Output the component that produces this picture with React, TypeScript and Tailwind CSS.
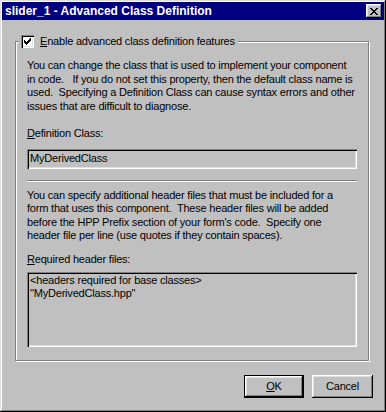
import React from "react";

const raised =
  "shadow-[inset_-1px_-1px_#000,inset_1px_1px_#fff,inset_-2px_-2px_#808080,inset_2px_2px_#dfdfdf]";
const sunken =
  "shadow-[inset_1px_1px_#808080,inset_2px_2px_#000,inset_-1px_-1px_#fff,inset_-2px_-2px_#dfdfdf]";

const CheckBox: React.FC = () => (
  <div className={`w-[13px] h-[13px] bg-white flex items-center justify-center ${sunken}`}>
    <svg width="7" height="7" viewBox="0 0 7 7" shapeRendering="crispEdges">
      <path d="M0 2h1v3H0zM1 3h1v3H1zM2 4h1v3H2zM3 3h1v3H3zM4 2h1v3H4zM5 1h1v3H5zM6 0h1v3H6z" fill="#000" />
    </svg>
  </div>
);

const App: React.FC = () => {
  return (
    <div
      className="w-[386px] h-[412px] bg-[#c0c0c0] p-[2px] flex flex-col text-black text-[11px] tracking-[-0.2px] shadow-[inset_-1px_-1px_#000,inset_1px_1px_#dfdfdf,inset_-2px_-2px_#808080,inset_2px_2px_#fff]"
      style={{ fontFamily: '"Liberation Sans", Arial, sans-serif' }}
    >
      {/* title bar */}
      <div className="h-[18px] bg-[#000080] flex items-center justify-between pl-[3px] pr-[2px]">
        <span className="text-white font-bold text-[12px] tracking-normal leading-none">
          slider_1 - Advanced Class Definition
        </span>
        <div className={`w-[16px] h-[14px] bg-[#c0c0c0] flex items-center justify-center ${raised}`}>
          <svg width="8" height="7" viewBox="0 0 8 7" shapeRendering="crispEdges">
            <path d="M0 0h2v1H0zM6 0h2v1H6zM1 1h2v1H1zM5 1h2v1H5zM2 2h4v1H2zM3 3h2v1H3zM2 4h4v1H2zM1 5h2v1H1zM5 5h2v1H5zM0 6h2v1H0zM6 6h2v1H6z" fill="#000" />
          </svg>
        </div>
      </div>

      <div className="flex-1 flex flex-col pl-[13px]">
        {/* group box */}
        <div className="relative mt-[21px] w-[354px] h-[320px] border border-[#808080] shadow-[1px_1px_#fff,inset_1px_1px_#fff] px-[11px] pt-[17px] flex flex-col">
          <div className="absolute -top-[7px] left-[3px] bg-[#c0c0c0] px-[2px] flex items-center gap-[6px] h-[13px] pr-[3px]">
            <CheckBox />
            <span className="leading-[13px]">
              <u>E</u>nable advanced class definition features
            </span>
          </div>

          <p className="leading-[13.5px] whitespace-nowrap">
            You can change the class that is used to implement your component
            <br />
            in code.&nbsp;&nbsp; If you do not set this property, then the default class name is
            <br />
            used.&nbsp; Specifying a Definition Class can cause syntax errors and other
            <br />
            issues that are difficult to diagnose.
          </p>

          <p className="mt-[14px] leading-[13.5px]">
            <u>D</u>efinition Class:
          </p>
          <div className={`mt-[8px] h-[20px] flex items-center pl-[3px] ${sunken}`}>MyDerivedClass</div>

          <div className="mt-[11px] h-[2px] border-t border-[#808080] border-b border-b-white" />

          <p className="mt-[7px] leading-[13.5px] whitespace-nowrap">
            You can specify additional header files that must be included for a
            <br />
            form that uses this component.&nbsp; These header files will be added
            <br />
            before the HPP Prefix section of your form's code.&nbsp; Specify one
            <br />
            header file per line (use quotes if they contain spaces).
          </p>

          <p className="mt-[10px] leading-[13.5px]">
            <u>R</u>equired header files:
          </p>
          <div className={`mt-[6px] h-[75px] pl-[3px] pt-[2px] leading-[13px] ${sunken}`}>
            <div>&lt;headers required for base classes&gt;</div>
            <div>"MyDerivedClass.hpp"</div>
          </div>
        </div>

        {/* buttons */}
        <div className="mt-[14px] flex justify-end gap-[8px] pr-[11px]">
          <button className="w-[60px] h-[23px] border border-black bg-[#c0c0c0] flex items-center justify-center shadow-[inset_-1px_-1px_#000,inset_1px_1px_#fff,inset_-2px_-2px_#808080,inset_2px_2px_#dfdfdf]">
            <span className="px-[2px]">
              <u>O</u>K
            </span>
          </button>
          <button className={`w-[61px] h-[23px] bg-[#c0c0c0] flex items-center justify-center ${raised}`}>
            Cancel
          </button>
        </div>
      </div>
    </div>
  );
};

export default App;
